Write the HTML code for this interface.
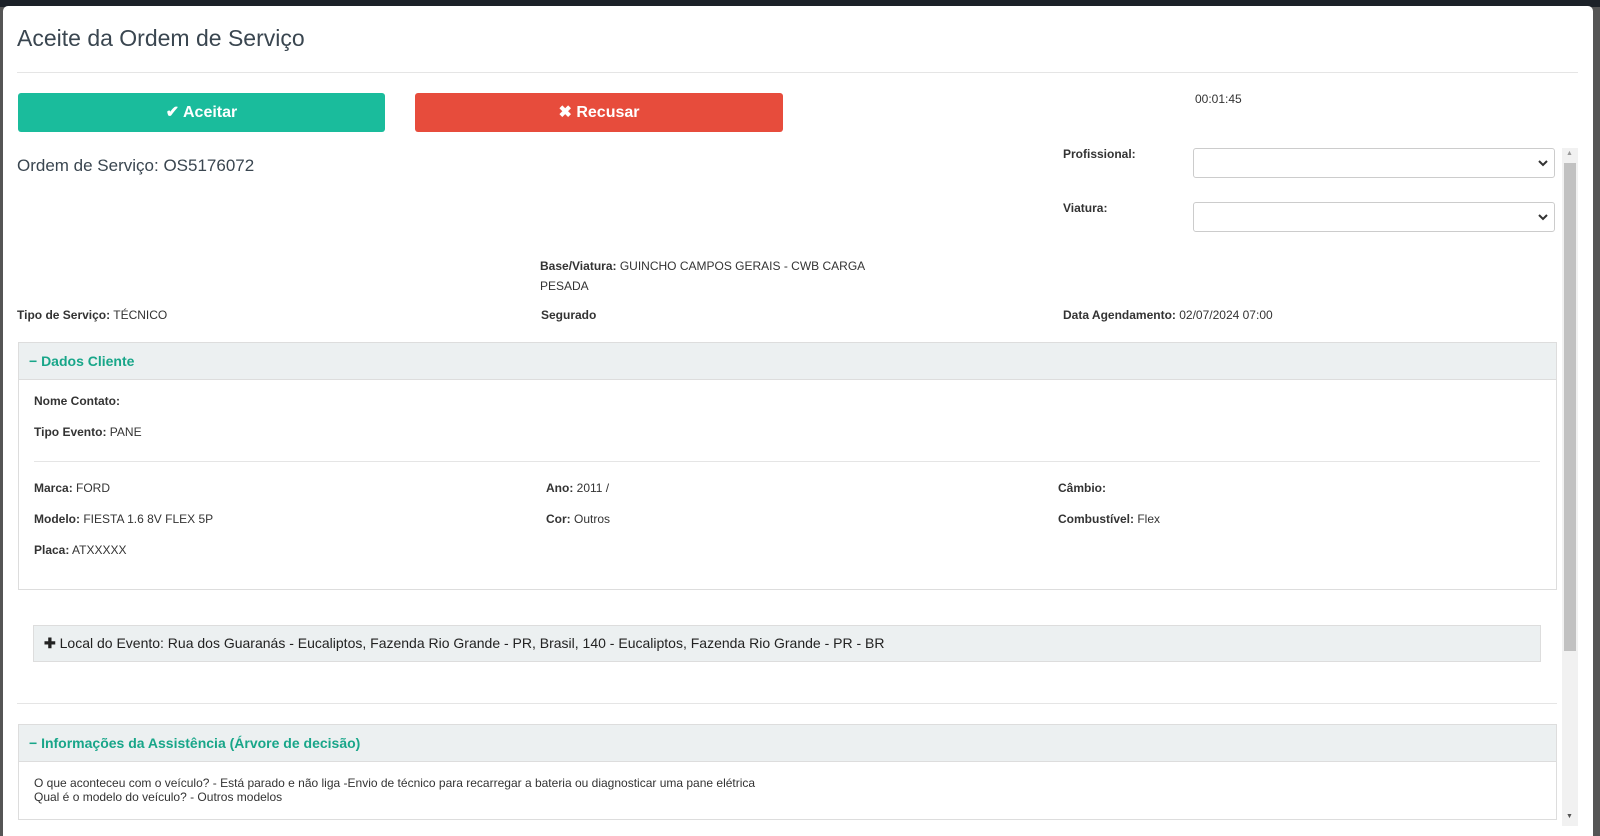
<!DOCTYPE html>
<html><head><meta charset="utf-8"><style>
*{margin:0;padding:0;box-sizing:border-box}
body{width:1600px;height:834px;overflow:hidden;background:#555;font-family:"Liberation Sans",Arial,sans-serif;color:#333;font-size:12px;position:relative}
.a{position:absolute;white-space:nowrap}
b{font-weight:bold}
#top{position:absolute;left:0;top:0;width:1600px;height:7px;background:#1c2128}
#modal{position:absolute;left:3px;top:6px;width:1590px;height:830px;background:#fff;border-radius:5px 5px 0 0}
.btn{position:absolute;height:39px;border-radius:3px;color:#fff;font-weight:bold;font-size:16px;text-align:center;line-height:39px}
.sel{position:absolute;height:30px;border:1px solid #ccc;border-radius:3px;background:#fff}
.sel svg{position:absolute;right:6px;top:10px}
.panel{position:absolute;border:1px solid #ddd}
.ph{position:absolute;left:0;right:0;top:0;height:37px;background:#ecf0f1;border-bottom:1px solid #ddd;color:#18a689;font-weight:bold;font-size:14px;line-height:37px;padding-left:10px}
.hr{position:absolute;height:1px;background:#e5e5e5}
</style></head><body>
<div id="top"></div>
<div id="modal"></div>
<div class="a" style="left:17px;top:25px;font-size:23px;color:#3a4650">Aceite da Ordem de Serviço</div>
<div class="hr" style="left:17px;top:72px;width:1561px"></div>
<div class="btn" style="left:18px;top:93px;width:367px;background:#1abc9c">✔ Aceitar</div>
<div class="btn" style="left:415px;top:93px;width:368px;background:#e74c3c">✖ Recusar</div>
<div class="a" style="left:1195px;top:92px">00:01:45</div>
<div class="a" style="left:17px;top:156px;font-size:17px;color:#3a4650">Ordem de Serviço: OS5176072</div>
<div class="a" style="left:1063px;top:147px"><b>Profissional:</b></div>
<div class="sel" style="left:1193px;top:148px;width:362px"><svg width="10" height="8" viewBox="0 0 10 8"><path d="M1 2l4 4 4-4" stroke="#333" stroke-width="2" fill="none"/></svg></div>
<div class="a" style="left:1063px;top:201px"><b>Viatura:</b></div>
<div class="sel" style="left:1193px;top:202px;width:362px"><svg width="10" height="8" viewBox="0 0 10 8"><path d="M1 2l4 4 4-4" stroke="#333" stroke-width="2" fill="none"/></svg></div>
<div class="a" style="left:540px;top:259px"><b>Base/Viatura:</b> GUINCHO CAMPOS GERAIS - CWB CARGA</div>
<div class="a" style="left:540px;top:279px">PESADA</div>
<div class="a" style="left:17px;top:308px"><b>Tipo de Serviço:</b> TÉCNICO</div>
<div class="a" style="left:541px;top:308px"><b>Segurado</b></div>
<div class="a" style="left:1063px;top:308px"><b>Data Agendamento:</b> 02/07/2024 07:00</div>
<div class="panel" style="left:18px;top:342px;width:1539px;height:248px"><div class="ph">− Dados Cliente</div></div>
<div class="a" style="left:34px;top:394px"><b>Nome Contato:</b></div>
<div class="a" style="left:34px;top:425px"><b>Tipo Evento:</b> PANE</div>
<div class="hr" style="left:34px;top:461px;width:1506px"></div>
<div class="a" style="left:34px;top:481px"><b>Marca:</b> FORD</div>
<div class="a" style="left:546px;top:481px"><b>Ano:</b> 2011 /</div>
<div class="a" style="left:1058px;top:481px"><b>Câmbio:</b></div>
<div class="a" style="left:34px;top:512px"><b>Modelo:</b> FIESTA 1.6 8V FLEX 5P</div>
<div class="a" style="left:546px;top:512px"><b>Cor:</b> Outros</div>
<div class="a" style="left:1058px;top:512px"><b>Combustível:</b> Flex</div>
<div class="a" style="left:34px;top:543px"><b>Placa:</b> ATXXXXX</div>
<div style="position:absolute;left:33px;top:625px;width:1508px;height:37px;background:#ecf0f1;border:1px solid #ddd;font-size:14px;line-height:35px;padding-left:10px;color:#222"><b>✚</b> Local do Evento: Rua dos Guaranás - Eucaliptos, Fazenda Rio Grande - PR, Brasil, 140 - Eucaliptos, Fazenda Rio Grande - PR - BR</div>
<div class="hr" style="left:17px;top:703px;width:1540px"></div>
<div class="panel" style="left:18px;top:724px;width:1539px;height:96px"><div class="ph">− Informações da Assistência (Árvore de decisão)</div></div>
<div class="a" style="left:34px;top:776px;line-height:14px">O que aconteceu com o veículo? - Está parado e não liga -Envio de técnico para recarregar a bateria ou diagnosticar uma pane elétrica<br>Qual é o modelo do veículo? - Outros modelos</div>
<div style="position:absolute;left:1562px;top:148px;width:16px;height:678px;background:#f1f1f1"></div>
<div style="position:absolute;left:1564px;top:163px;width:12px;height:488px;background:#c1c1c1"></div>
<div class="a" style="left:1566px;top:150px;font-size:7px;color:#999">▲</div>
<div class="a" style="left:1566px;top:813px;font-size:7px;color:#555">▼</div>
</body></html>
